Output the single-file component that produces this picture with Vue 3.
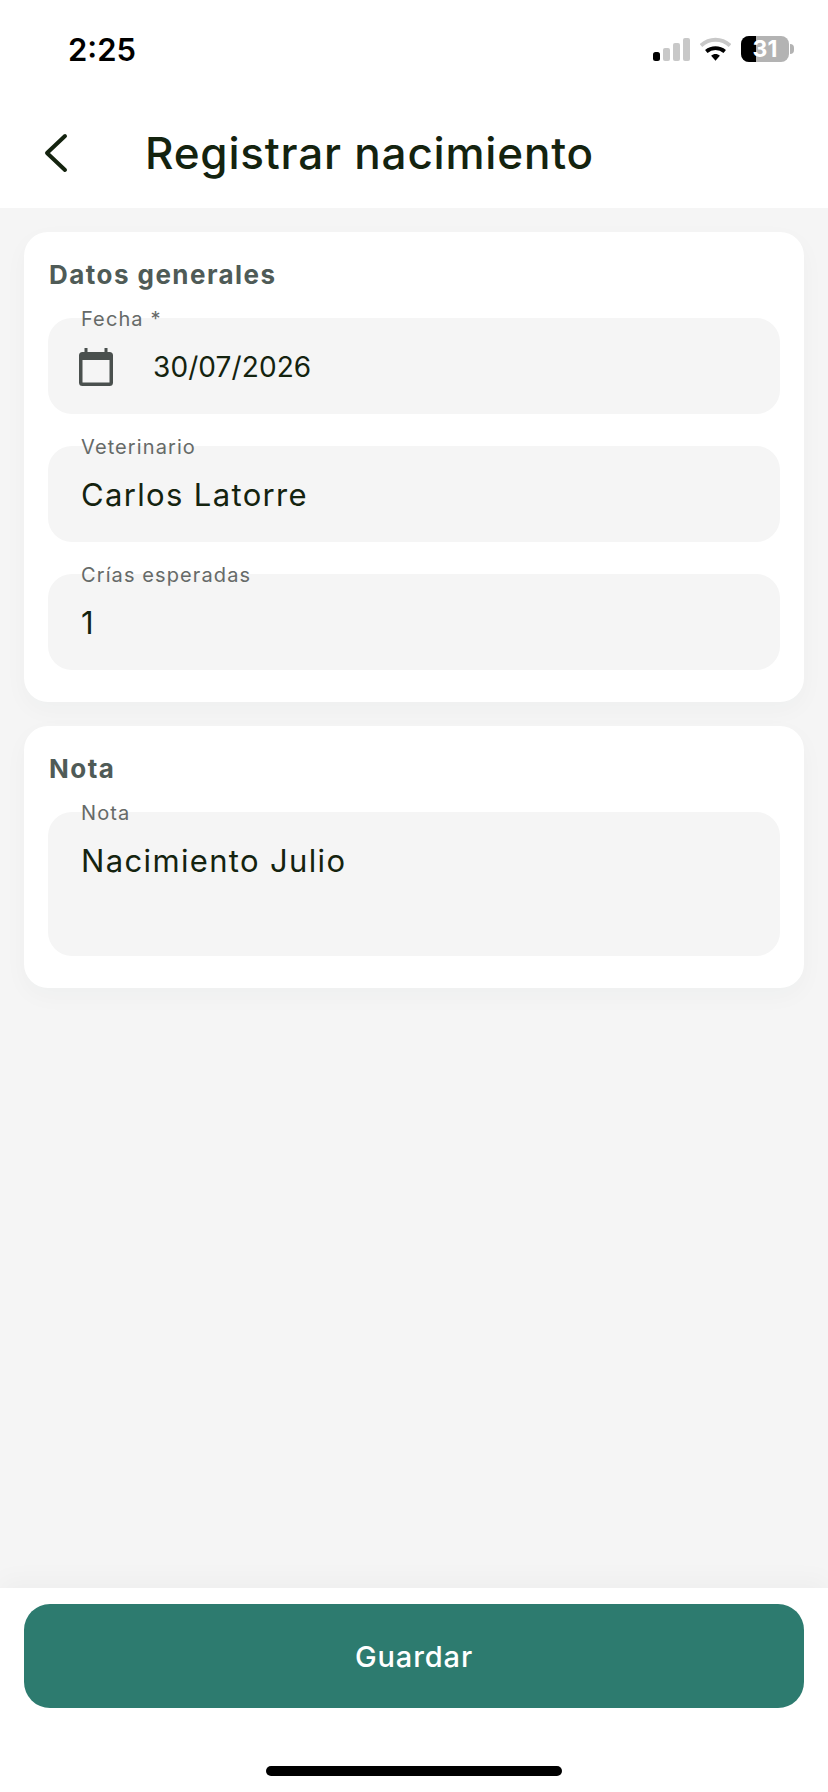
<script setup>
const generalFields = [
  { label: 'Fecha *', value: '30/07/2026', icon: true },
  { label: 'Veterinario', value: 'Carlos Latorre' },
  { label: 'Crías esperadas', value: '1' },
]
</script>

<template>
  <div class="screen">
    <header class="top">
      <div class="status">
        <span class="time">2:25</span>
        <div class="status-icons">
          <svg class="signal" width="37" height="23" viewBox="0 0 37 23">
            <rect x="0" y="14" width="7" height="9" rx="2.5" fill="#000" />
            <rect x="10" y="10" width="7" height="13" rx="2" fill="#c8c8c8" />
            <rect x="20" y="5" width="7" height="18" rx="2" fill="#c8c8c8" />
            <rect x="30" y="0" width="7" height="23" rx="2" fill="#c8c8c8" />
          </svg>
          <svg class="wifi" width="31" height="24" viewBox="0 0 32 24">
            <path d="M1 8.500 C9.500 0.500 22.500 0.500 31 8.500" fill="none" stroke="#c8c8c8" stroke-width="4" />
            <path d="M6.500 14.500 C12 10 20 10 25.500 14.500" fill="none" stroke="#000" stroke-width="4" />
            <path d="M11.500 19 L16 24 L20.500 19 C18 16.500 14 16.500 11.500 19 Z" fill="#000" />
          </svg>
          <div class="battery">
            <div class="battery-body">
              <div class="battery-level"></div>
              <span class="battery-num">31</span>
            </div>
            <div class="battery-tip"></div>
          </div>
        </div>
      </div>
      <div class="navbar">
        <svg class="back" width="26" height="40" viewBox="0 0 26 40">
          <path d="M23 3 L5 20 L23 37" fill="none" stroke="#14230f" stroke-width="4" stroke-linecap="round" stroke-linejoin="round" />
        </svg>
        <h1 class="title">Registrar nacimiento</h1>
      </div>
    </header>

    <main class="content">
      <section class="card">
        <h2 class="card-title">Datos generales</h2>
        <div class="fields">
          <div v-for="f in generalFields" :key="f.label" class="field">
            <span class="label">{{ f.label }}</span>
            <svg v-if="f.icon" class="cal" width="34" height="38" viewBox="0 0 34 38">
              <path fill="#4a504e" fill-rule="evenodd" d="M5.500 0h3v4h17V0h3v4h2A3.500 3.500 0 0 1 34 7.500v27a3.500 3.500 0 0 1-3.500 3.500h-27A3.500 3.500 0 0 1 0 34.500v-27A3.500 3.500 0 0 1 3.500 4h2V0ZM3.500 12v22.500h27V12h-27Z" />
            </svg>
            <span class="value" :class="{ 'date-value': f.icon }">{{ f.value }}</span>
          </div>
        </div>
      </section>

      <section class="card">
        <h2 class="card-title">Nota</h2>
        <div class="field note">
          <span class="label">Nota</span>
          <span class="value">Nacimiento Julio</span>
        </div>
      </section>
    </main>

    <footer class="footer">
      <button class="save" type="button">Guardar</button>
      <div class="home-bar"></div>
    </footer>
  </div>
</template>

<style scoped>
.screen {
  width: 828px;
  height: 1792px;
  display: flex;
  flex-direction: column;
  background: #f5f5f5;
  font-family: Inter, "Liberation Sans", sans-serif;
  overflow: hidden;
}
.top {
  height: 208px;
  background: #fff;
  flex: none;
}
.status {
  height: 100px;
  display: flex;
  align-items: center;
  justify-content: space-between;
  padding: 0 34px 2px 68px;
  box-sizing: border-box;
}
.time {
  font-size: 31px;
  font-weight: 600;
  color: #000;
  line-height: 1;
}
.status-icons {
  display: flex;
  align-items: center;
  gap: 10px;
}
.battery {
  display: flex;
  align-items: center;
  gap: 1px;
}
.battery-body {
  position: relative;
  width: 48px;
  height: 26px;
  border-radius: 8px;
  background: #b3b3b3;
  overflow: hidden;
  display: flex;
  align-items: center;
  justify-content: center;
}
.battery-level {
  position: absolute;
  left: 0;
  top: 0;
  bottom: 0;
  width: 15px;
  background: #000;
}
.battery-num {
  position: relative;
  font-size: 23px;
  font-weight: 700;
  color: #fff;
  line-height: 1;
}
.battery-tip {
  width: 4px;
  height: 10px;
  background: #b3b3b3;
  border-radius: 0 4px 4px 0;
}
.navbar {
  height: 108px;
  display: flex;
  align-items: center;
  padding-left: 42px;
  padding-bottom: 2px;
  box-sizing: border-box;
}
.back {
  flex: none;
}
.title {
  margin: 0 0 0 77px;
  font-size: 44px;
  font-weight: 500;
  color: #14230f;
  line-height: 1;
  letter-spacing: 0.8px;
}
.content {
  flex: 1;
  padding: 24px 24px 0;
  display: flex;
  flex-direction: column;
  gap: 24px;
}
.card {
  background: #fff;
  border-radius: 24px;
  padding: 30px 24px 32px;
  box-shadow: 0 8px 24px rgba(40, 60, 50, 0.03);
}
.card-title {
  margin: 0 0 25px 1px;
  height: 31px;
  font-size: 26px;
  font-weight: 700;
  line-height: 1;
  letter-spacing: 1.45px;
  color: #4f5b57;
}
.fields {
  display: flex;
  flex-direction: column;
  gap: 32px;
}
.field {
  position: relative;
  height: 96px;
  background: #f5f5f5;
  border-radius: 24px;
  display: flex;
  align-items: center;
  padding: 1px 33px 0;
  box-sizing: border-box;
}
.field.note {
  height: 144px;
  align-items: flex-start;
  padding-top: 31px;
}
.label {
  position: absolute;
  left: 33px;
  top: -11px;
  font-size: 20px;
  line-height: 24px;
  letter-spacing: 1.1px;
  color: #666a68;
}
.value {
  font-size: 31px;
  line-height: 36px;
  letter-spacing: 1.35px;
  color: #14230f;
}
.date-value {
  font-size: 28px;
  letter-spacing: 0.1px;
}
.cal {
  flex: none;
  margin-left: -2px;
  margin-right: 40px;
}
.footer {
  flex: none;
  height: 204px;
  background: #fff;
  padding: 16px 24px 0;
  box-sizing: border-box;
  position: relative;
  box-shadow: 0 -8px 24px rgba(0, 0, 0, 0.03);
}
.save {
  display: block;
  width: 100%;
  height: 104px;
  border: none;
  border-radius: 26px;
  padding-top: 2px;
  background: #2d7b6f;
  color: #fff;
  font-family: inherit;
  font-size: 29px;
  font-weight: 500;
  letter-spacing: 0.9px;
}
.home-bar {
  width: 296px;
  height: 10px;
  margin: 58px auto 0;
  border-radius: 5px;
  background: #000;
}
</style>
